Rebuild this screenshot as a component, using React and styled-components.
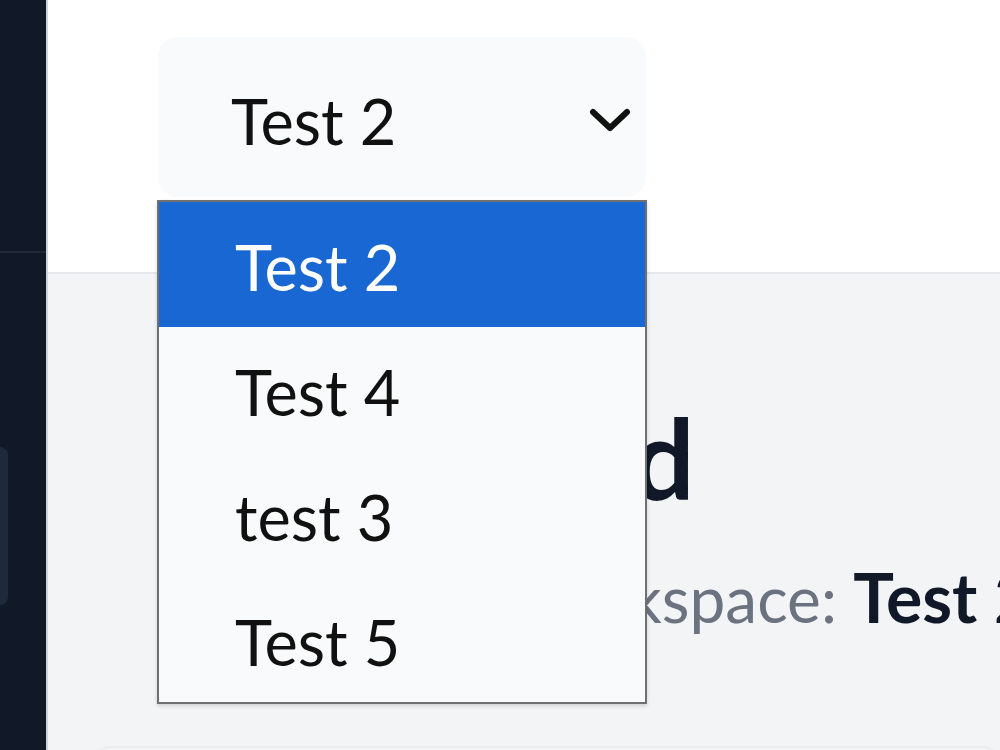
import React from 'react';
import styled, { createGlobalStyle } from 'styled-components';

const Global = createGlobalStyle`
  html, body { margin: 0; padding: 0; height: 100%; overflow: hidden; }
  body { font-family: Lato, "Noto Sans", sans-serif; background: #f3f4f6; }
  #root { height: 100%; }
`;

const Shell = styled.div`
  display: flex;
  width: 1000px;
  height: 750px;
  overflow: hidden;
`;

const Sidebar = styled.aside`
  width: 46px;
  flex: none;
  background: #111827;
  border-right: 2px solid #d1d5db;
  display: flex;
  flex-direction: column;
`;

const SidebarTop = styled.div`
  height: 251px;
  border-bottom: 2px solid #1f2937;
`;

const SidebarNav = styled.nav`
  padding-top: 194px;
  display: flex;
  flex-direction: column;
`;

const NavItem = styled.div`
  width: 8px;
  height: 158px;
  background: #1e293b;
  border-radius: 0 8px 8px 0;
`;

const Main = styled.main`
  flex: 1;
  min-width: 0;
  display: flex;
  flex-direction: column;
  background: #f3f4f6;
`;

const Header = styled.header`
  flex: none;
  height: 274px;
  box-sizing: border-box;
  background: #ffffff;
  border-bottom: 2px solid #e5e7eb;
  padding: 37px 0 0 110px;
`;

const SelectWrap = styled.div`
  position: relative;
  width: 488px;
`;

const SelectButton = styled.div`
  width: 488px;
  height: 160px;
  box-sizing: border-box;
  background: #f9fafb;
  border-radius: 20px;
  display: flex;
  align-items: center;
  justify-content: space-between;
  padding: 8px 15px 0 73px;
  font-size: 63px;
  color: #111111;
  line-height: 1.2;
`;

const Chevron = styled.svg`
  width: 42px;
  height: 26px;
  margin-top: -2px;
  flex: none;
`;

const OptionList = styled.ul`
  position: absolute;
  top: 163px;
  left: -1px;
  width: 490px;
  box-sizing: border-box;
  margin: 0;
  padding: 0;
  list-style: none;
  background: #f9fafb;
  border: 2px solid #707070;
  box-shadow: 0 2px 4px rgba(0, 0, 0, 0.15);
  z-index: 5;
`;

const Option = styled.li`
  height: 125px;
  box-sizing: border-box;
  display: flex;
  align-items: center;
  padding: 4px 0 0 76px;
  font-size: 63px;
  line-height: 1.2;
  background: ${(p) => (p.$selected ? '#1967d2' : 'transparent')};
  color: ${(p) => (p.$selected ? '#ffffff' : '#111111')};
`;

const Content = styled.section`
  flex: 1;
  padding: 117px 0 0 110px;
`;

const Title = styled.h1`
  margin: 0;
  font-size: 111px;
  font-weight: 700;
  line-height: 1.2;
  color: #111827;
  white-space: nowrap;
`;

const Subtitle = styled.p`
  margin: 32px 0 0;
  font-size: 64px;
  line-height: 1.2;
  color: #6b7280;
  white-space: nowrap;
`;

const Strong = styled.strong`
  font-weight: 700;
  font-size: 68px;
  color: #111827;
`;

const Card = styled.div`
  margin: 110px 0 0 -64px;
  height: 300px;
  background: #f3f4f6;
  border-radius: 16px;
  box-shadow: 0 -1px 3px rgba(0, 0, 0, 0.06);
`;

const options = ['Test 2', 'Test 4', 'test 3', 'Test 5'];

export default function App() {
  return (
    <>
      <Global />
      <Shell>
        <Sidebar>
          <SidebarTop />
          <SidebarNav>
            <NavItem />
          </SidebarNav>
        </Sidebar>
        <Main>
          <Header>
            <SelectWrap>
              <SelectButton>
                <span>Test 2</span>
                <Chevron viewBox="0 0 42 26" fill="none">
                  <path d="M4 5 L21 21 L38 5" stroke="#111" strokeWidth="6" strokeLinecap="round" strokeLinejoin="round" />
                </Chevron>
              </SelectButton>
              <OptionList>
                {options.map((o, i) => (
                  <Option key={o} $selected={i === 0}>{o}</Option>
                ))}
              </OptionList>
            </SelectWrap>
          </Header>
          <Content>
            <Title>Dashboard</Title>
            <Subtitle>
              Your current workspace: <Strong>Test 2</Strong>
            </Subtitle>
            <Card />
          </Content>
        </Main>
      </Shell>
    </>
  );
}
